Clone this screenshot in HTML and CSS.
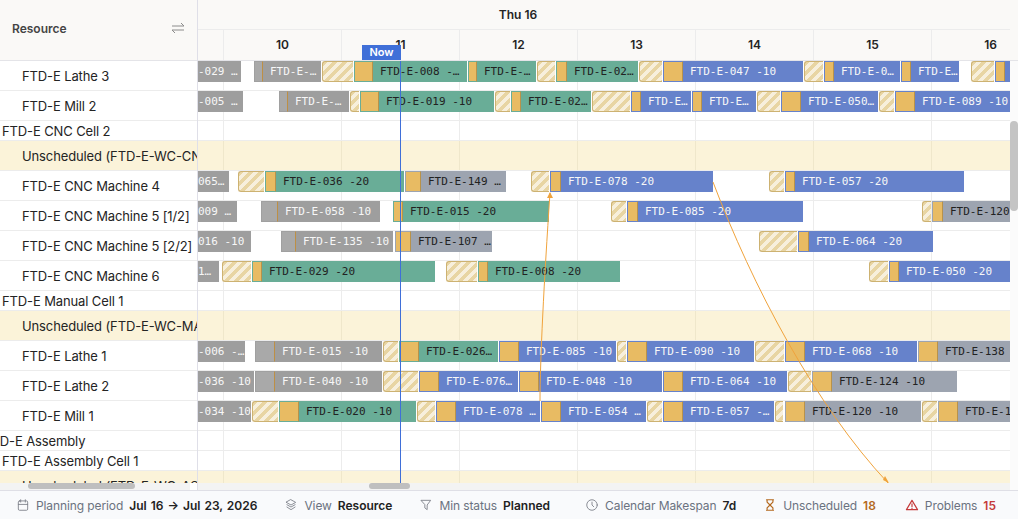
FILE: index.html
```html
<!DOCTYPE html>
<html lang="en">
<head>
    <meta charset="UTF-8">
    <title>Planning board</title>
    <link rel="stylesheet" href="styles.css">
</head>
<body>
    <div class="app">
        <div class="main">
            <div class="sidebar">
                <div class="side-head">
                    <span>Resource</span>
                    <svg class="swap" width="14" height="12" viewBox="0 0 14 12"><path d="M1 4h12M10 1l3 3M13 8H1M4 11L1 8"/></svg>
                </div>
                <div class="tree">
                    <div class="item res">FTD-E Lathe 3</div>
                    <div class="item res">FTD-E Mill 2</div>
                    <div class="item cell">FTD-E CNC Cell 2</div>
                    <div class="item res tinted">Unscheduled (FTD-E-WC-CNC-2)</div>
                    <div class="item res">FTD-E CNC Machine 4</div>
                    <div class="item res">FTD-E CNC Machine 5 [1/2]</div>
                    <div class="item res">FTD-E CNC Machine 5 [2/2]</div>
                    <div class="item res">FTD-E CNC Machine 6</div>
                    <div class="item cell">FTD-E Manual Cell 1</div>
                    <div class="item res tinted">Unscheduled (FTD-E-WC-MAN-1)</div>
                    <div class="item res">FTD-E Lathe 1</div>
                    <div class="item res">FTD-E Lathe 2</div>
                    <div class="item res">FTD-E Mill 1</div>
                    <div class="item area">FTD-E Assembly</div>
                    <div class="item cell">FTD-E Assembly Cell 1</div>
                    <div class="item res tinted">Unscheduled (FTD-E-WC-ASM-1)</div>
                </div>
                <div class="hscroll side-scroll"><div class="hthumb"></div></div>
            </div>

            <div class="chart">
                <div class="chart-head">
                    <div class="head-day">Thu 16</div>
                    <div class="head-hours">
                        <span>10</span><span>11</span><span>12</span><span>13</span><span>14</span><span>15</span><span>16</span>
                    </div>
                </div>
                <div class="chart-body">
                    <div class="row">
                        <div class="bar gray" style="left:0;width:43px"><span>-029 …</span></div>
                        <div class="bar gray" style="left:56px;width:67px"><i style="width:9px"></i><span>FTD-E-…</span></div>
                        <div class="hatch" style="left:124px;width:31px"></div>
                        <div class="bar green" style="left:156px;width:113px"><i style="width:19px"></i><span>FTD-E-008 -…</span></div>
                        <div class="bar green" style="left:270px;width:68px"><i style="width:9px"></i><span>FTD-E-…</span></div>
                        <div class="hatch" style="left:339px;width:18px"></div>
                        <div class="bar green" style="left:358px;width:82px"><i style="width:11px"></i><span>FTD-E-02…</span></div>
                        <div class="hatch" style="left:441px;width:23px"></div>
                        <div class="bar blue" style="left:465px;width:140px"><i style="width:20px"></i><span>FTD-E-047 -10</span></div>
                        <div class="hatch" style="left:606px;width:19px"></div>
                        <div class="bar blue" style="left:626px;width:76px"><i style="width:10px"></i><span>FTD-E-0…</span></div>
                        <div class="bar blue" style="left:703px;width:58px"><i style="width:10px"></i><span>FTD-E…</span></div>
                        <div class="hatch" style="left:773px;width:23px"></div>
                        <div class="bar blue" style="left:797px;width:15px"><i style="width:10px"></i></div>
                    </div>
                    <div class="row">
                        <div class="bar gray" style="left:0;width:45px"><span>-005 …</span></div>
                        <div class="bar gray" style="left:81px;width:70px"><i style="width:9px"></i><span>FTD-E-…</span></div>
                        <div class="hatch" style="left:152px;width:9px"></div>
                        <div class="bar green" style="left:162px;width:134px"><i style="width:19px"></i><span>FTD-E-019 -10</span></div>
                        <div class="hatch" style="left:297px;width:15px"></div>
                        <div class="bar green" style="left:313px;width:80px"><i style="width:10px"></i><span>FTD-E-02…</span></div>
                        <div class="hatch" style="left:394px;width:38px"></div>
                        <div class="bar blue" style="left:433px;width:60px"><i style="width:10px"></i><span>FTD-E…</span></div>
                        <div class="bar blue" style="left:494px;width:64px"><i style="width:10px"></i><span>FTD-E…</span></div>
                        <div class="hatch" style="left:559px;width:23px"></div>
                        <div class="bar blue" style="left:583px;width:97px"><i style="width:20px"></i><span>FTD-E-050…</span></div>
                        <div class="hatch" style="left:681px;width:15px"></div>
                        <div class="bar blue" style="left:697px;width:115px"><i style="width:20px"></i><span>FTD-E-089 -10</span></div>
                    </div>
                    <div class="row group"></div>
                    <div class="row tinted"></div>
                    <div class="row">
                        <div class="bar gray" style="left:0;width:31px"><span>065…</span></div>
                        <div class="hatch" style="left:40px;width:26px"></div>
                        <div class="bar green" style="left:67px;width:139px"><i style="width:11px"></i><span>FTD-E-036 -20</span></div>
                        <div class="bar slate" style="left:207px;width:101px"><i style="width:16px"></i><span>FTD-E-149 …</span></div>
                        <div class="hatch" style="left:333px;width:18px"></div>
                        <div class="bar blue" style="left:352px;width:163px"><i style="width:11px"></i><span>FTD-E-078 -20</span></div>
                        <div class="hatch" style="left:571px;width:15px"></div>
                        <div class="bar blue" style="left:587px;width:179px"><i style="width:10px"></i><span>FTD-E-057 -20</span></div>
                    </div>
                    <div class="row">
                        <div class="bar gray" style="left:0;width:39px"><span>009 …</span></div>
                        <div class="bar gray" style="left:63px;width:119px"><i style="width:17px"></i><span>FTD-E-058 -10</span></div>
                        <div class="bar green" style="left:195px;width:156px"><i style="width:10px"></i><span>FTD-E-015 -20</span></div>
                        <div class="hatch" style="left:413px;width:15px"></div>
                        <div class="bar blue" style="left:429px;width:176px"><i style="width:11px"></i><span>FTD-E-085 -20</span></div>
                        <div class="hatch" style="left:724px;width:9px"></div>
                        <div class="bar slate" style="left:734px;width:78px"><i style="width:11px"></i><span>FTD-E-120</span></div>
                    </div>
                    <div class="row">
                        <div class="bar gray" style="left:0;width:53px"><span>016 -10</span></div>
                        <div class="bar gray" style="left:83px;width:112px"><i style="width:15px"></i><span>FTD-E-135 -10</span></div>
                        <div class="bar slate" style="left:197px;width:97px"><i style="width:16px"></i><span>FTD-E-107 …</span></div>
                        <div class="hatch" style="left:561px;width:38px"></div>
                        <div class="bar blue" style="left:600px;width:135px"><i style="width:11px"></i><span>FTD-E-064 -20</span></div>
                    </div>
                    <div class="row">
                        <div class="bar gray" style="left:0;width:21px"><span>1…</span></div>
                        <div class="hatch" style="left:24px;width:29px"></div>
                        <div class="bar green" style="left:54px;width:183px"><i style="width:10px"></i><span>FTD-E-029 -20</span></div>
                        <div class="hatch" style="left:248px;width:31px"></div>
                        <div class="bar green" style="left:280px;width:142px"><i style="width:10px"></i><span>FTD-E-008 -20</span></div>
                        <div class="hatch" style="left:671px;width:19px"></div>
                        <div class="bar blue" style="left:691px;width:121px"><i style="width:10px"></i><span>FTD-E-050 -20</span></div>
                    </div>
                    <div class="row group"></div>
                    <div class="row tinted"></div>
                    <div class="row">
                        <div class="bar gray" style="left:0;width:47px"><span>-006 -…</span></div>
                        <div class="bar gray" style="left:57px;width:127px"><i style="width:20px"></i><span>FTD-E-015 -10</span></div>
                        <div class="hatch" style="left:185px;width:15px"></div>
                        <div class="bar green" style="left:201px;width:99px"><i style="width:20px"></i><span>FTD-E-026…</span></div>
                        <div class="bar blue" style="left:301px;width:117px"><i style="width:20px"></i><span>FTD-E-085 -10</span></div>
                        <div class="hatch" style="left:419px;width:9px"></div>
                        <div class="bar blue" style="left:429px;width:127px"><i style="width:20px"></i><span>FTD-E-090 -10</span></div>
                        <div class="hatch" style="left:557px;width:29px"></div>
                        <div class="bar blue" style="left:587px;width:132px"><i style="width:20px"></i><span>FTD-E-068 -10</span></div>
                        <div class="bar slate" style="left:720px;width:92px"><i style="width:20px"></i><span>FTD-E-138</span></div>
                    </div>
                    <div class="row">
                        <div class="bar gray" style="left:0;width:56px"><span>-036 -10</span></div>
                        <div class="bar gray" style="left:57px;width:127px"><i style="width:20px"></i><span>FTD-E-040 -10</span></div>
                        <div class="hatch" style="left:185px;width:35px"></div>
                        <div class="bar blue" style="left:221px;width:99px"><i style="width:20px"></i><span>FTD-E-076…</span></div>
                        <div class="bar blue" style="left:321px;width:143px"><i style="width:20px"></i><span>FTD-E-048 -10</span></div>
                        <div class="bar blue" style="left:465px;width:124px"><i style="width:20px"></i><span>FTD-E-064 -10</span></div>
                        <div class="hatch" style="left:590px;width:23px"></div>
                        <div class="bar slate" style="left:614px;width:145px"><i style="width:20px"></i><span>FTD-E-124 -10</span></div>
                    </div>
                    <div class="row">
                        <div class="bar gray" style="left:0;width:53px"><span>-034 -10</span></div>
                        <div class="hatch" style="left:54px;width:26px"></div>
                        <div class="bar green" style="left:81px;width:137px"><i style="width:20px"></i><span>FTD-E-020 -10</span></div>
                        <div class="hatch" style="left:219px;width:18px"></div>
                        <div class="bar blue" style="left:238px;width:104px"><i style="width:20px"></i><span>FTD-E-078 …</span></div>
                        <div class="bar blue" style="left:343px;width:105px"><i style="width:20px"></i><span>FTD-E-054 …</span></div>
                        <div class="hatch" style="left:449px;width:15px"></div>
                        <div class="bar blue" style="left:465px;width:111px"><i style="width:20px"></i><span>FTD-E-057 -…</span></div>
                        <div class="hatch" style="left:577px;width:8px"></div>
                        <div class="bar slate" style="left:587px;width:136px"><i style="width:20px"></i><span>FTD-E-120 -10</span></div>
                        <div class="hatch" style="left:724px;width:15px"></div>
                        <div class="bar slate" style="left:740px;width:72px"><i style="width:20px"></i><span>FTD-E-1…</span></div>
                    </div>
                    <div class="row group"></div>
                    <div class="row group"></div>
                    <div class="row tinted"></div>

                    <!-- dependency arrows and the now line sit over the rows -->
                    <svg class="links" width="812" height="422" viewBox="0 0 812 422">
                        <path d="M515 121 C 554 224, 617 344, 690 422"/>
                        <path d="M342 340 C 342 300, 346 220, 352 132"/>
                        <path class="head" d="M352 131l-3 6h6zM691 422l-6-3 2-4z"/>
                    </svg>
                    <div class="now-line"></div>
                </div>
                <div class="now-tag">Now</div>
                <div class="hscroll chart-scroll"><div class="hthumb"></div></div>
            </div>

            <div class="vscroll"><div class="vthumb"></div></div>
        </div>

        <div class="statusbar">
            <div class="stat">
                <svg viewBox="0 0 24 24"><rect x="4" y="5" width="16" height="16" rx="2"/><path d="M16 3v4M8 3v4M4 11h16"/></svg>
                <span class="label">Planning period</span><b class="date">Jul 16 → Jul 23, 2026</b>
            </div>
            <div class="stat">
                <svg viewBox="0 0 24 24"><path d="M12 3l8 4.5-8 4.5-8-4.5zM5 11.5l7 4 7-4M5 15.5l7 4.5 7-4.5"/></svg>
                <span class="label">View</span><b>Resource</b>
            </div>
            <div class="stat">
                <svg viewBox="0 0 24 24"><path d="M4 4h16l-6 8v8l-4-3v-5z"/></svg>
                <span class="label">Min status</span><b>Planned</b>
            </div>
            <div class="stat wide">
                <svg viewBox="0 0 24 24"><circle cx="12" cy="12" r="9"/><path d="M12 7v5l3 3"/></svg>
                <span class="label">Calendar Makespan</span><b>7d</b>
            </div>
            <div class="stat warn">
                <svg viewBox="0 0 24 24"><path d="M6 3h12M6 21h12M7 3v4l5 5 5-5V3M7 21v-4l5-5 5 5v4"/></svg>
                <span class="label">Unscheduled</span><b>18</b>
            </div>
            <div class="stat danger">
                <svg viewBox="0 0 24 24"><path d="M12 4L2.5 20h19zM12 10v5M12 17.5v.5"/></svg>
                <span class="label">Problems</span><b>15</b>
            </div>
        </div>
    </div>
</body>
</html>
```
FILE: styles.css
```css
* {
    box-sizing: border-box;
}
body {
    margin: 0;
    font-family: Inter, "Noto Sans", sans-serif;
    color: #242424;
    background: white;
}
.app {
    display: flex;
    flex-direction: column;
    height: 519px;
    overflow: hidden;
}
.main {
    flex: 1;
    display: flex;
    min-height: 0;
}

/* left column */
.sidebar {
    width: 198px;
    display: flex;
    flex-direction: column;
    border-right: 1px solid #dfdfe8;
}
.side-head {
    height: 61px;
    flex: none;
    display: flex;
    align-items: center;
    justify-content: space-between;
    padding: 0 12px 4px;
    background: #faf9f7;
    border-bottom: 1px solid #e4e4e8;
    font-size: 12px;
    font-weight: 600;
    color: #444;
}
.swap {
    fill: none;
    stroke: #8c8c8c;
    stroke-width: 1;
}
.tree {
    flex: 1;
    overflow: hidden;
}
.item {
    white-space: nowrap;
    overflow: hidden;
    font-size: 13px;
    letter-spacing: -0.12px;
    border-bottom: 1px solid #ececec;
}
.res {
    height: 30px;
    line-height: 30px;
    padding-left: 22px;
}
.cell {
    height: 20px;
    line-height: 20px;
    padding-left: 2px;
}
.area {
    height: 20px;
    line-height: 20px;
    text-indent: -16px;
}
.item.tinted {
    background: #fbf3d9;
}

/* timeline */
.chart {
    flex: 1;
    min-width: 0;
    position: relative;
    display: flex;
    flex-direction: column;
}
.chart-head {
    height: 61px;
    flex: none;
    background: #faf9f7;
    border-bottom: 1px solid #e4e4e8;
    font-size: 12px;
    font-weight: 600;
}
.head-day {
    height: 30px;
    line-height: 30px;
    text-align: center;
    border-bottom: 1px solid #ececec;
    padding-right: 172px;
}
.head-hours {
    display: flex;
    padding-left: 25px;
    height: 30px;
}
.head-hours span {
    width: 118px;
    flex: none;
    line-height: 30px;
    text-align: center;
    border-left: 1px solid #ececec;
}
.chart-body {
    flex: 1;
    position: relative;
    overflow: hidden;
}
.row {
    position: relative;
    height: 30px;
    border-bottom: 1px solid #ececec;
    background: linear-gradient(90deg, #ececec 1px, transparent 1px) 25px 0 / 118px 100%;
}
.row.group {
    height: 20px;
}
.row.tinted {
    background: linear-gradient(90deg, #efe7cb 1px, transparent 1px) 25px 0 / 118px 100%, #fbf3d9;
}
.bar,
.hatch {
    position: absolute;
    top: 0;
    height: 21px;
}
.bar {
    display: flex;
    overflow: hidden;
    white-space: nowrap;
    font-family: "DejaVu Sans Mono", monospace;
    font-size: 11px;
    line-height: 21px;
    color: #f7f7f7;
}
.bar i {
    flex: none;
    background: #e8bb63;
    border: 1px solid transparent;
    border-right-color: #b8924a;
    background-clip: padding-box;
}
.bar i + span {
    padding-left: 7px;
}
.gray {
    background: #9e9e9e;
}
.gray i {
    background: #a9a9a9;
    border-color: #a0a0a0 #bd8f45 #a0a0a0 #a0a0a0;
}
.green {
    background: #69ad97;
    color: #222;
}
.blue {
    background: #6682cb;
}
.slate {
    background: #9da4b0;
    color: #222;
}
.hatch {
    border: 1px solid #cdb272;
    border-right: none;
    border-radius: 3px 0 0 3px;
    background: repeating-linear-gradient(135deg, #e8d5a3 0 3.5px, #f7efdc 3.5px 7px);
}

/* overlays */
.links {
    position: absolute;
    left: 0;
    top: 0;
    fill: none;
    stroke: #f0a33c;
    stroke-width: 1;
}
.links .head {
    fill: #f0a33c;
    stroke: none;
}
.now-line {
    position: absolute;
    left: 202px;
    top: 0;
    bottom: 0;
    width: 1px;
    background: #3f6fd8;
}
.now-tag {
    position: absolute;
    left: 164px;
    top: 45px;
    width: 39px;
    height: 15px;
    background: #4070d8;
    color: white;
    font-size: 11px;
    font-weight: 600;
    line-height: 15px;
    text-align: center;
}

/* scrollbars */
.hscroll {
    height: 7px;
    flex: none;
    background: #f3f3f3;
}
.hthumb {
    height: 6px;
    background: #bfbfbf;
    border-radius: 3px;
}
.side-scroll {
    padding-left: 28px;
    padding-right: 62px;
    background: linear-gradient(90deg, #f3f3f3 190px, white 190px);
}
.chart-scroll {
    padding-left: 171px;
    padding-right: 600px;
}
.vscroll {
    width: 8px;
    flex: none;
    padding-top: 121px;
    background: linear-gradient(#faf9f7 60px, #e4e4e8 60px 61px, #fbfbfb 61px);
}
.vthumb {
    height: 90px;
    background: #c4c4c4;
    border-radius: 4px;
}

/* footer */
.statusbar {
    height: 29px;
    flex: none;
    display: flex;
    align-items: center;
    gap: 27px;
    padding-left: 16px;
    background: #f9fafc;
    border-top: 1px solid #dfdfe6;
    font-size: 12px;
    white-space: nowrap;
}
.stat {
    display: flex;
    align-items: center;
}
.stat svg {
    width: 14px;
    height: 14px;
    fill: none;
    stroke: #7b7f88;
    stroke-width: 1.5;
    stroke-linecap: round;
    stroke-linejoin: round;
    margin-right: 6px;
}
.label {
    color: #6b7280;
    letter-spacing: -0.1px;
    margin-right: 6px;
}
.stat b {
    font-weight: 600;
    color: #222;
}
.stat .date {
    word-spacing: 1px;
}
.wide {
    margin-left: 8px;
}
.warn svg {
    stroke: #b4691f;
    stroke-width: 2;
}
.warn b {
    color: #b4691f;
}
.danger {
    margin-left: 2px;
}
.danger svg {
    stroke: #c53a3a;
    stroke-width: 2;
}
.danger b {
    color: #c53a3a;
}
```
